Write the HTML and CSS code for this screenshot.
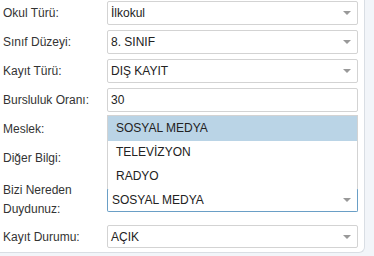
FILE: index.html
```html
<!DOCTYPE html>
<html lang="tr">
<head>
<meta charset="utf-8">
<link rel="stylesheet" href="styles.css">
</head>
<body>
<div class="panel">
  <div class="form">
    <label class="lbl">Okul Türü:</label>
    <div class="field select"><span>İlkokul</span><i class="arrow"></i></div>

    <label class="lbl">Sınıf Düzeyi:</label>
    <div class="field select"><span>8. SINIF</span><i class="arrow"></i></div>

    <label class="lbl">Kayıt Türü:</label>
    <div class="field select"><span>DIŞ KAYIT</span><i class="arrow"></i></div>

    <label class="lbl">Bursluluk Oranı:</label>
    <div class="field input"><span>30</span></div>

    <label class="lbl">Meslek:</label>
    <div class="field select"><span></span><i class="arrow"></i></div>

    <label class="lbl">Diğer Bilgi:</label>
    <div class="field input"><span></span></div>

    <label class="lbl lbl-two">Bizi Nereden<br>Duydunuz:</label>
    <div class="field select open">
      <span>SOSYAL MEDYA</span><i class="arrow"></i>
      <ul class="dropdown">
        <li class="opt active">SOSYAL MEDYA</li>
        <li class="opt">TELEVİZYON</li>
        <li class="opt last">RADYO</li>
      </ul>
    </div>

    <label class="lbl">Kayıt Durumu:</label>
    <div class="field select short"><span>AÇIK</span><i class="arrow"></i></div>
  </div>
</div>
</body>
</html>
```

FILE: styles.css
```css
* { box-sizing: border-box; }
html, body {
  margin: 0;
  padding: 0;
  background: #f2f5f9;
  font-family: "Liberation Sans", Arial, sans-serif;
  font-size: 12px;
  color: #333;
}
.panel {
  width: 365px;
  height: 253px;
  background: #fff;
  border-right: 1px solid #d9dee4;
  border-bottom: 1px solid #d9dee4;
  border-bottom-right-radius: 6px;
}
.form {
  display: grid;
  grid-template-columns: 104px 251px;
  grid-template-rows: repeat(6, 24px) 45px 23px;
  row-gap: 5px;
  padding: 1px 0 0 3px;
}
.lbl {
  align-self: center;
  line-height: 14px;
  color: #333;
}
.lbl-two {
  align-self: start;
  line-height: 19px;
  padding-top: 6px;
}
.field {
  position: relative;
  height: 24px;
  border: 1px solid #d3d3d3;
  border-radius: 2px;
  background: #fff;
  display: flex;
  align-items: center;
  padding-left: 3px;
  color: #222;
  align-self: center;
}
.field.short { height: 23px; }
.arrow {
  position: absolute;
  right: 6px;
  top: 50%;
  margin-top: -2px;
  width: 0;
  height: 0;
  border-left: 4px solid transparent;
  border-right: 4px solid transparent;
  border-top: 4px solid #999;
}
.open {
  align-self: start;
  margin-top: 13px;
  border-color: #6a9fc6;
  border-top-color: #c9d6df;
  padding-left: 4px;
}
.dropdown {
  position: absolute;
  left: -1px;
  right: -1px;
  bottom: 100%;
  margin: 0;
  padding: 0;
  list-style: none;
  background: #fff;
  border: 1px solid #d3d3d3;
  border-bottom: none;
}
.opt {
  height: 23px;
  line-height: 23px;
  padding-left: 8px;
  color: #222;
}
.opt.active,
.opt.last {
  height: 25px;
  line-height: 25px;
}
.opt.active {
  background: #bad4e6;
}
```
